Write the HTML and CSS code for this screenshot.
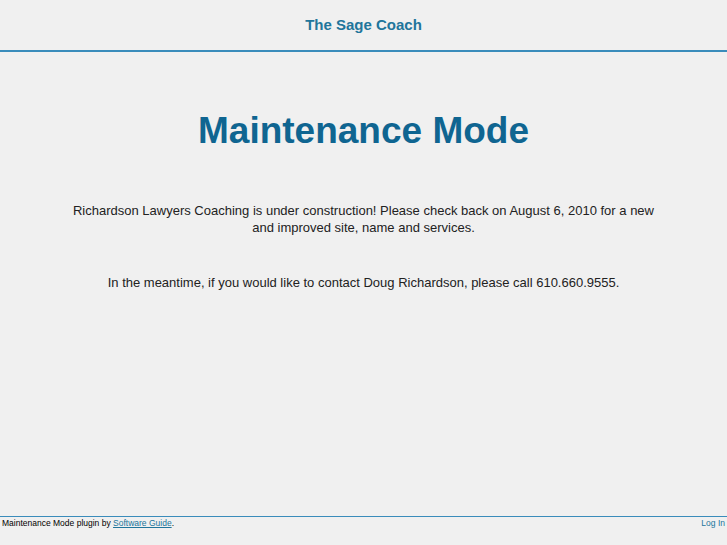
FILE: index.html
```html
<!DOCTYPE html>
<html>
<head>
<meta charset="utf-8">
<link rel="stylesheet" href="styles.css">
<title>Maintenance Mode</title>
</head>
<body>
<div class="page">
  <header class="header">
    <a class="site-title" href="#">The Sage Coach</a>
  </header>
  <main class="content">
    <h1 class="title">Maintenance Mode</h1>
    <p class="msg">Richardson Lawyers Coaching is under construction! Please check back on August 6, 2010 for a new and improved site, name and services.</p>
    <p class="msg second">In the meantime, if you would like to contact Doug Richardson, please call 610.660.9555.</p>
  </main>
  <footer class="footer">
    <span class="credit">Maintenance Mode plugin by <a href="#" class="ul">Software Guide</a>.</span>
    <a href="#" class="login">Log In</a>
  </footer>
</div>
</body>
</html>
```
FILE: styles.css
```css
html, body {
  margin: 0;
  padding: 0;
  background: #f0f0f0;
  height: 100%;
}
body {
  font-family: "Liberation Sans", Arial, sans-serif;
  color: #222;
}
.page {
  display: flex;
  flex-direction: column;
  height: 545px;
}
.header {
  display: flex;
  justify-content: center;
  align-items: flex-start;
  box-sizing: border-box;
  height: 52px;
  border-bottom: 2px solid #3a8cbb;
}
.site-title {
  margin-top: 16px;
  font-size: 15px;
  font-weight: bold;
  color: #21759b;
  text-decoration: none;
  line-height: 18px;
}
.content {
  flex: 1;
  text-align: center;
  max-width: 596px;
  margin: 0 auto;
}
.title {
  margin: 58px 0 0;
  font-size: 37px;
  line-height: 42px;
  font-weight: bold;
  color: #0f6591;
}
.msg {
  margin: 50px 0 0;
  font-size: 13px;
  line-height: 17px;
  color: #222;
}
.msg.second {
  margin-top: 38px;
}
.footer {
  height: 29px;
  box-sizing: border-box;
  margin-top: 1px;
  border-top: 1px solid #3a8cbb;
  display: flex;
  justify-content: space-between;
  align-items: flex-start;
  font-size: 8.5px;
  line-height: 12px;
  padding: 0 2px;
}
.credit {
  color: #000;
}
.ul {
  color: #21759b;
}
.login {
  color: #21759b;
  text-decoration: none;
}
```
